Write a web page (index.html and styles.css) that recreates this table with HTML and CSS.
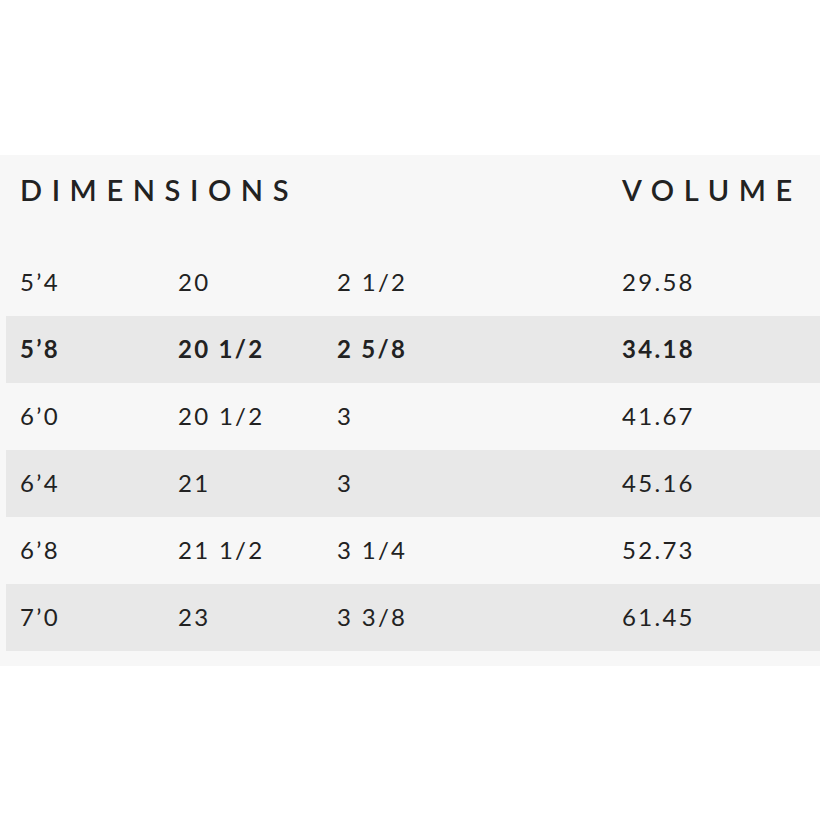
FILE: index.html
```html
<!DOCTYPE html>
<html>
<head>
<meta charset="utf-8">
<link rel="stylesheet" href="styles.css">
</head>
<body>
<div class="panel">
  <div class="head">
    <div class="h-dim">DIMENSIONS</div>
    <div class="h-vol">VOLUME</div>
  </div>
  <div class="row"><span>5’4</span><span>20</span><span>2 1/2</span><span>29.58</span></div>
  <div class="row alt bold"><span>5’8</span><span>20 1/2</span><span>2 5/8</span><span>34.18</span></div>
  <div class="row"><span>6’0</span><span>20 1/2</span><span>3</span><span>41.67</span></div>
  <div class="row alt"><span>6’4</span><span>21</span><span>3</span><span>45.16</span></div>
  <div class="row"><span>6’8</span><span>21 1/2</span><span>3 1/4</span><span>52.73</span></div>
  <div class="row alt"><span>7’0</span><span>23</span><span>3 3/8</span><span>61.45</span></div>
</div>
</body>
</html>
```
FILE: styles.css
```css
html, body { margin: 0; padding: 0; background: #ffffff; }
body { font-family: Lato, "Liberation Sans", sans-serif; color: #222222; }
.panel {
  margin-top: 155px;
  background: #f7f7f7;
  padding: 0 0 15px 6px;
}
.head {
  display: grid;
  grid-template-columns: 616px 1fr;
  height: 94px;
  align-items: start;
}
.h-dim, .h-vol {
  font-size: 29px;
  font-weight: 600;
  letter-spacing: 9.6px;
  line-height: 1;
  padding-top: 20px;
}
.h-dim { padding-left: 14px; }
.row {
  display: grid;
  grid-template-columns: 172px 159px 285px 1fr;
  height: 67px;
  align-items: center;
  font-size: 24px;
  letter-spacing: 2.3px;
  padding-bottom: 3px;
  box-sizing: border-box;
}
.row span:first-child { padding-left: 14px; }
.alt { background: #e8e8e8; }
.bold { font-weight: 700; }
```
